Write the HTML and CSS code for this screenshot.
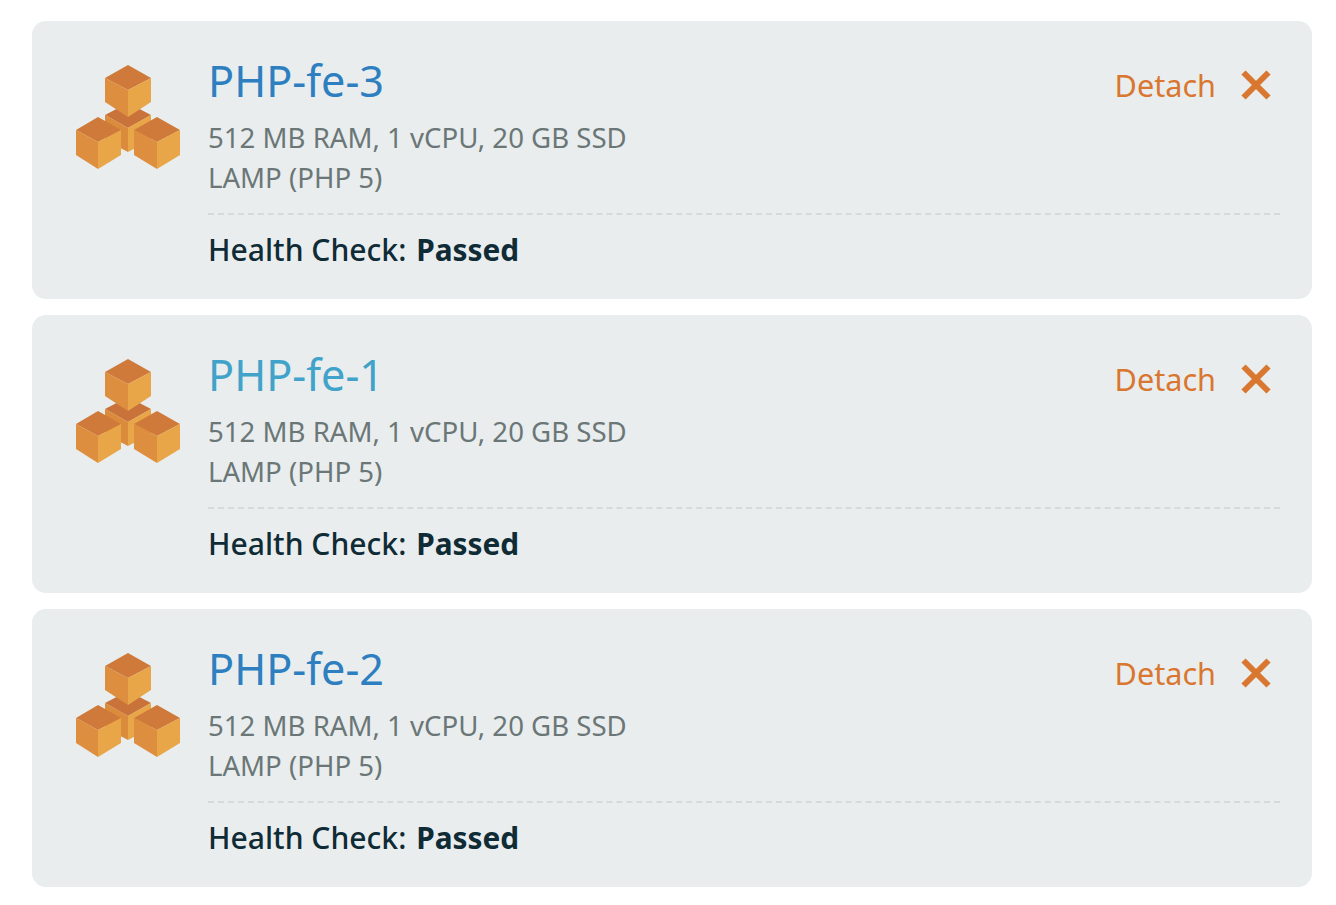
FILE: index.html
```html
<!DOCTYPE html>
<html lang="en">
<head>
<meta charset="utf-8">
<title>Instances</title>
<link rel="stylesheet" href="styles.css">
</head>
<body>
<main class="list">
  <section class="card">
    <svg class="cubes" viewBox="75 64 106 106" aria-hidden="true"><use href="#cubes"/></svg>
    <div class="body">
      <div class="head">
        <a class="name" href="#">PHP-fe-3</a>
        <div class="actions"><span class="detach">Detach</span>
          <svg class="close" viewBox="0 0 30 30" aria-hidden="true"><path d="M2.5 2.5 27.500 27.500M27.500 2.500 2.500 27.500"/></svg>
        </div>
      </div>
      <p class="spec">512 MB RAM, 1 vCPU, 20 GB SSD</p>
      <p class="spec">LAMP (PHP 5)</p>
      <p class="health">Health Check: <b>Passed</b></p>
    </div>
  </section>
  <section class="card">
    <svg class="cubes" viewBox="75 64 106 106" aria-hidden="true"><use href="#cubes"/></svg>
    <div class="body">
      <div class="head">
        <a class="name hover" href="#">PHP-fe-1</a>
        <div class="actions"><span class="detach">Detach</span>
          <svg class="close" viewBox="0 0 30 30" aria-hidden="true"><path d="M2.5 2.5 27.500 27.500M27.500 2.500 2.500 27.500"/></svg>
        </div>
      </div>
      <p class="spec">512 MB RAM, 1 vCPU, 20 GB SSD</p>
      <p class="spec">LAMP (PHP 5)</p>
      <p class="health">Health Check: <b>Passed</b></p>
    </div>
  </section>
  <section class="card">
    <svg class="cubes" viewBox="75 64 106 106" aria-hidden="true"><use href="#cubes"/></svg>
    <div class="body">
      <div class="head">
        <a class="name" href="#">PHP-fe-2</a>
        <div class="actions"><span class="detach">Detach</span>
          <svg class="close" viewBox="0 0 30 30" aria-hidden="true"><path d="M2.5 2.5 27.500 27.500M27.500 2.500 2.500 27.500"/></svg>
        </div>
      </div>
      <p class="spec">512 MB RAM, 1 vCPU, 20 GB SSD</p>
      <p class="spec">LAMP (PHP 5)</p>
      <p class="health">Health Check: <b>Passed</b></p>
    </div>
  </section>
</main>
<svg class="defs" aria-hidden="true">
  <defs>
    <g id="cubes">
      <polygon fill="#c9733a" points="128,103 151,115 128,128 105,115"/>
      <polygon fill="#db8b3c" points="105,115 128,128 128,152 105,140"/>
      <polygon fill="#e8a648" points="151,115 128,128 128,152 151,140"/>
      <polygon fill="#cf7a3a" points="128,65 151,78 128,90 105,78"/>
      <polygon fill="#dd8e3e" points="105,78 128,90 128,117 105,102"/>
      <polygon fill="#e8a648" points="151,78 128,90 128,117 151,102"/>
      <polygon fill="#cf7a3a" points="98,117 121,130 98,142 76,130"/>
      <polygon fill="#dd8e3e" points="76,130 98,142 98,169 76,155"/>
      <polygon fill="#e8a648" points="121,130 98,142 98,169 121,155"/>
      <polygon fill="#cf7a3a" points="157,117 180,130 157,142 134,130"/>
      <polygon fill="#dd8e3e" points="134,130 157,142 157,169 134,155"/>
      <polygon fill="#e8a648" points="180,130 157,142 157,169 180,155"/>
    </g>
  </defs>
</svg>
</body>
</html>
```
FILE: styles.css
```css
* { box-sizing: border-box; }
html, body { margin: 0; background: #fff; }
body { font-family: "Noto Sans", "Open Sans", sans-serif; }
.list { display: flex; flex-direction: column; gap: 16px; padding: 21px 24px 18px 32px; }
.card { display: flex; height: 278px; padding: 43px 32px 0 43px; background: #e9edee; border-radius: 14px; }
.cubes { flex: none; width: 106px; height: 106px; margin-right: 27px; }
.body { flex: 1; min-width: 0; margin-top: -43px; padding-top: 30px; }
.head { display: flex; justify-content: space-between; align-items: flex-start; height: 60px; }
.name { font-size: 43.2px; line-height: 60px; color: #2e7fbf; text-decoration: none; }
.name.hover { color: #41a3c9; }
.actions { display: flex; align-items: center; gap: 25px; height: 60px; padding-right: 9px; padding-top: 8px; }
.detach { font-size: 30.6px; color: #d9762f; }
.close { width: 30px; height: 30px; fill: none; stroke: #d9762f; stroke-width: 6; }
.spec { margin: 0; font-size: 27.6px; line-height: 40px; color: #6b7777; }
.spec:first-of-type { margin-top: 6px; }
.health { margin: 16px 0 0; padding-top: 15px; border-top: 2px dashed #d5dbdb; font-size: 30.1px; line-height: 40px; font-weight: 500; color: #0f2b36; }
.health b { margin-left: 2px; font-size: 29.8px; font-weight: 700; }
.defs { position: absolute; width: 0; height: 0; }
```
